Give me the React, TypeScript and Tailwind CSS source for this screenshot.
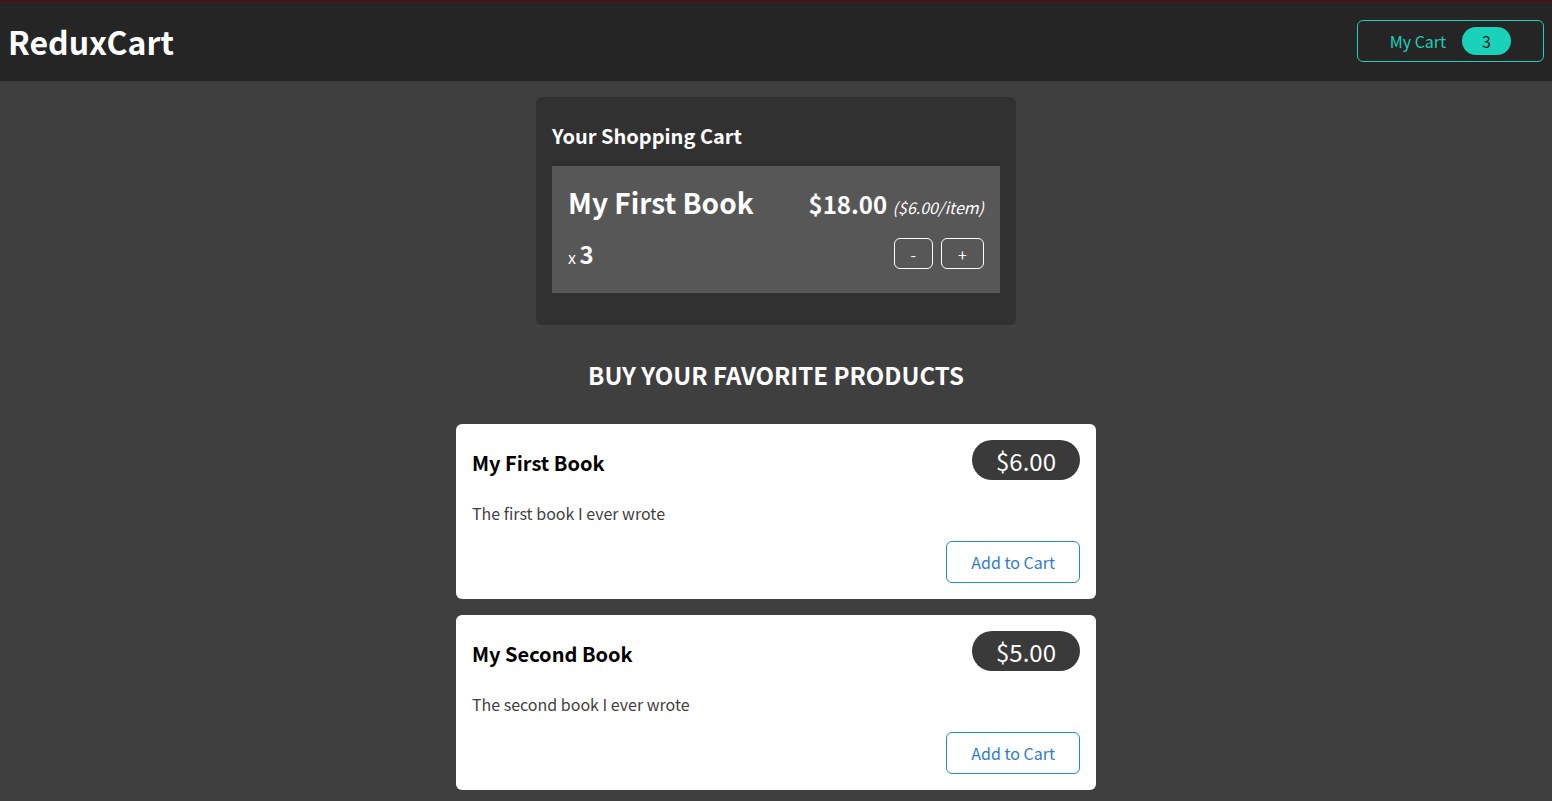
import { useState } from "react";

type Product = { id: string; title: string; price: number; description: string };

const products: Product[] = [
  { id: "p1", title: "My First Book", price: 6, description: "The first book I ever wrote" },
  { id: "p2", title: "My Second Book", price: 5, description: "The second book I ever wrote" },
];

export default function App() {
  const [cart, setCart] = useState<Record<string, number>>({ p1: 3 });
  const [open, setOpen] = useState(true);
  const total = Object.values(cart).reduce((sum, n) => sum + n, 0);
  const change = (id: string, by: number) =>
    setCart((c) => ({ ...c, [id]: Math.max(0, (c[id] ?? 0) + by) }));

  return (
    <div className="min-h-screen bg-[#3f3f3f] font-['Noto_Sans_CJK_JP',sans-serif] text-base leading-6 text-white">
      <header className="flex h-[81px] items-center justify-between border-t border-[#700000] bg-[#252525] px-2">
        <h1 className="text-[32px] leading-[46px] font-bold">ReduxCart</h1>
        <button
          type="button"
          onClick={() => setOpen(!open)}
          className="flex h-[42px] items-center gap-4 rounded-md border border-[#1ad1b9] px-8 text-[#1ad1b9]"
        >
          <span>My Cart</span>
          <span className="rounded-full bg-[#1ad1b9] px-5 leading-7 text-[#252525]">{total}</span>
        </button>
      </header>
      <main>
        {open && (
          <section className="mx-auto mt-4 w-full max-w-[480px] rounded-md bg-[#313131] p-4 pb-8">
            <h2 className="my-2 text-xl leading-[30px] font-bold">Your Shopping Cart</h2>
            <ul className="mt-[15px]">
              {products
                .filter((p) => cart[p.id] > 0)
                .map((p) => (
                  <li key={p.id} className="bg-[#575757] p-4">
                    <div className="flex items-baseline justify-between">
                      <h3 className="text-[28px] leading-10 font-bold">{p.title}</h3>
                      <div className="text-2xl leading-9 font-bold">
                        ${(cart[p.id] * p.price).toFixed(2)}{" "}
                        <span className="text-base font-normal italic">(${p.price.toFixed(2)}/item)</span>
                      </div>
                    </div>
                    <div className="mt-4 mb-[7px] flex items-start justify-between">
                      <div>
                        x <span className="text-2xl leading-8 font-bold">{cart[p.id]}</span>
                      </div>
                      <div className="flex gap-2">
                        <button type="button" aria-label="Remove one" onClick={() => change(p.id, -1)} className="h-[31px] rounded-md border border-white px-4">-</button>
                        <button type="button" aria-label="Add one" onClick={() => change(p.id, 1)} className="h-[31px] rounded-md border border-white px-4">+</button>
                      </div>
                    </div>
                  </li>
                ))}
            </ul>
          </section>
        )}
        <section className="mx-auto mt-8 w-full max-w-[640px]">
          <h2 className="text-center text-2xl leading-9 font-bold uppercase">Buy your favorite products</h2>
          <ul className="mt-[31px] flex flex-col gap-4 pb-4">
            {products.map((p) => (
              <li key={p.id} className="rounded-md bg-white p-4 text-[#3f3f3f]">
                <div className="flex items-start justify-between">
                  <h3 className="mt-2 text-xl leading-[30px] font-bold text-black">{p.title}</h3>
                  <div className="h-10 rounded-full bg-[#3a3a3a] px-6 text-2xl leading-[42px] text-white">${p.price.toFixed(2)}</div>
                </div>
                <p className="mt-[21px]">{p.description}</p>
                <div className="mt-4 flex justify-end">
                  <button type="button" onClick={() => change(p.id, 1)} className="h-[42px] rounded-md border border-[#1a8ed1] px-6 text-[#2c7dc9]">
                    Add to Cart
                  </button>
                </div>
              </li>
            ))}
          </ul>
        </section>
      </main>
    </div>
  );
}
